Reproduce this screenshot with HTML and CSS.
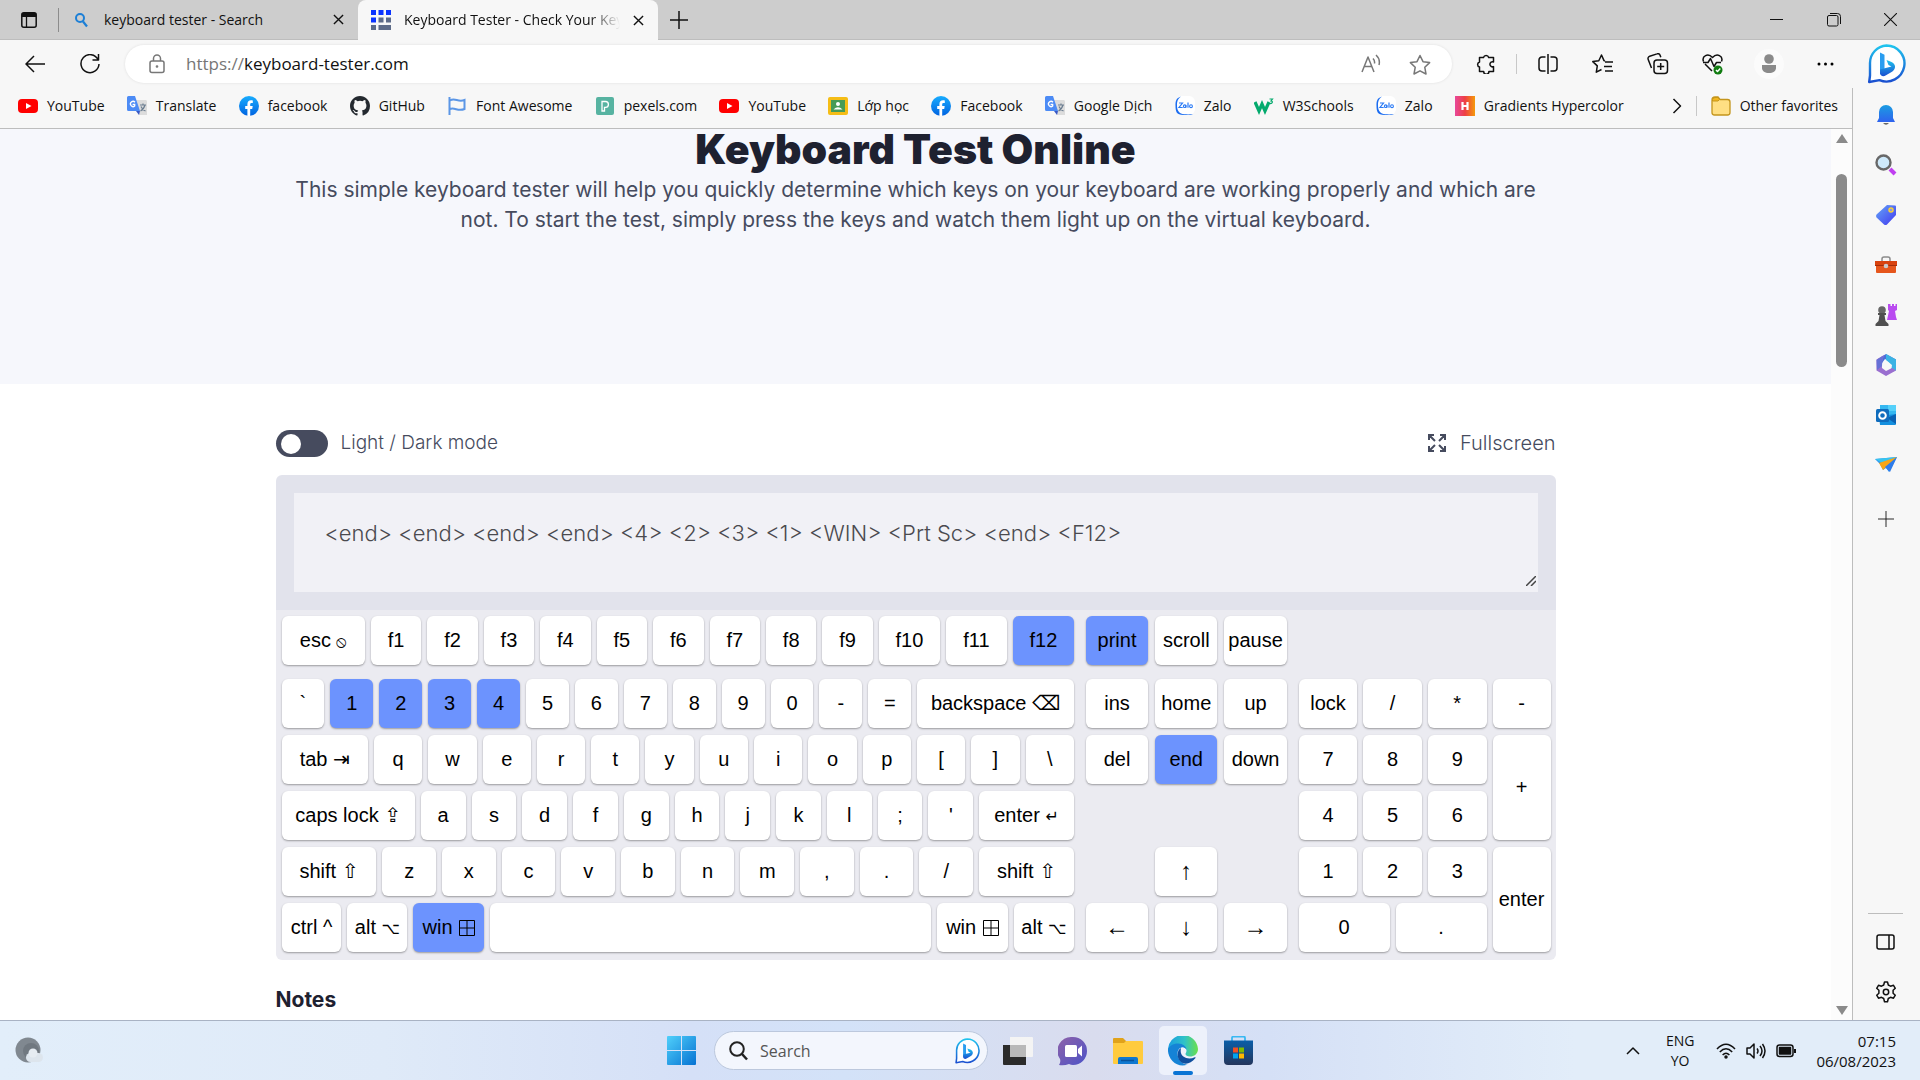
FILE: index.html
```html
<!DOCTYPE html>
<html lang="en">
<head>
<meta charset="utf-8">
<title>Keyboard Tester - Check Your Keys</title>
<link rel="stylesheet" href="styles.css">
</head>
<body>
<svg class="defs" aria-hidden="true">
  <defs>
    <linearGradient id="g-bing" x1="0" y1="0" x2="0" y2="1"><stop offset="0" stop-color="#1fc4ee"/><stop offset="1" stop-color="#1a4fd0"/></linearGradient>
    <linearGradient id="g-blue" x1="0" y1="0" x2="1" y2="1"><stop offset="0" stop-color="#64a6f7"/><stop offset="1" stop-color="#4238f0"/></linearGradient>
    <linearGradient id="g-bell" x1="0" y1="0" x2="0" y2="1"><stop offset="0" stop-color="#1b9de2"/><stop offset="1" stop-color="#2f62ee"/></linearGradient>
    <linearGradient id="g-win" x1="0" y1="0" x2="1" y2="1"><stop offset="0" stop-color="#50d0fb"/><stop offset="1" stop-color="#0672d2"/></linearGradient>
    <linearGradient id="g-fb" x1="0" y1="0" x2="0" y2="1"><stop offset="0" stop-color="#18acfe"/><stop offset="1" stop-color="#0163e0"/></linearGradient>
    <linearGradient id="g-chat" x1="0" y1="0" x2="1" y2="1"><stop offset="0" stop-color="#8f62a8"/><stop offset="1" stop-color="#4c53c8"/></linearGradient>
    <linearGradient id="g-edge" x1="0" y1="0" x2="1" y2="0"><stop offset="0" stop-color="#1a9de0"/><stop offset=".55" stop-color="#2fc2c8"/><stop offset="1" stop-color="#6be04a"/></linearGradient>
    <linearGradient id="g-hyper" x1="0" y1="0" x2="1" y2="0"><stop offset="0" stop-color="#e8489a"/><stop offset=".5" stop-color="#ee3f44"/><stop offset="1" stop-color="#f59a0a"/></linearGradient>
    <linearGradient id="g-store" x1="0" y1="0" x2="0" y2="1"><stop offset="0" stop-color="#0a5ea8"/><stop offset="1" stop-color="#24365c"/></linearGradient>
    <symbol id="i-close" viewBox="0 0 12 12"><path d="M1 1l10 10M11 1L1 11"/></symbol>
    <symbol id="i-plus" viewBox="0 0 18 18"><path d="M9 0v18M0 9h18"/></symbol>
    <symbol id="i-youtube" viewBox="0 0 20 20"><rect y="3" width="20" height="14" rx="4" fill="#f00"/><path d="M8 7l5.500 3L8 13z" fill="#fff"/></symbol>
    <symbol id="i-translate" viewBox="0 0 20 20"><path d="M9 4h9.500c.8 0 1.500.7 1.500 1.500V19H12z" fill="#dcdcdc"/><path d="M1.500 0H8l5 15H1.500A1.500 1.500 0 010 13.500v-12A1.500 1.500 0 011.500 0z" fill="#4c8bf5"/><path d="M9 15h4l-1 4z" fill="#3757c4"/><path d="M8 6.200A2.600 2.600 0 107.700 10V8.500H5.600" fill="none" stroke="#fff" stroke-width="1.300"/><path d="M13 9h6M16 7.500V9M18 9c-.8 3-2.600 5-4.500 6M14 10.500c.8 2 2.500 3.700 4.500 4.500" fill="none" stroke="#6d7f92" stroke-width="1.200"/></symbol>
    <symbol id="i-facebook" viewBox="0 0 20 20"><circle cx="10" cy="10" r="10" fill="url(#g-fb)"/><path d="M8.400 20v-7H6.200v-3h2.200V8.200c0-2.600 1.400-3.900 3.600-3.900.7 0 1.500.1 1.800.2v2.400h-1.200c-1.100 0-1.400.6-1.400 1.400V10h2.500l-.5 3h-2v7z" fill="#fff"/></symbol>
    <symbol id="i-zalo" viewBox="0 0 20 20"><rect x="1" width="19" height="19" rx="6" fill="#fff"/><path d="M6 .5C1 2 .4 5 .5 10s.5 9 8 9c3.500 0 7 .2 9.500-.8-3 .2-9 .5-12-.7C2.500 15.500 2 12 2 9s.5-6 4-8.500z" fill="#1a6cf0"/><path d="M4 7h3.500L4 11.500h3.700M10.800 9v2.800M13 6.500v5.300" fill="none" stroke="#2a7af5" stroke-width="1.200"/><circle cx="9.700" cy="10.200" r="1.300" fill="none" stroke="#2a7af5" stroke-width="1.100"/><circle cx="16" cy="10.200" r="1.400" fill="none" stroke="#2a7af5" stroke-width="1.100"/></symbol>
    <symbol id="i-bing" viewBox="0 0 40 40"><path d="M20.500 1.500a18 18 0 11-7 34.600L3.200 38 4 31.500V19A17.500 17.500 0 0120.500 1.500z" fill="#fff" stroke="url(#g-bing)" stroke-width="2.400" stroke-linejoin="round"/><path d="M14 8.500l4.500 2.200v15.500L14 29.500z" fill="#2a9df0"/><path d="M14 25.500v4.200c1 2.800 3.500 3 6 1.600l6-3.600c3-2 4-5.200 2-7.700-.8-1-1.500-1.500-3-2.200L20.500 16l2 5 3 1.500z" fill="url(#g-bing)"/></symbol>
  </defs>
</svg>

<header class="titlebar">
  <button class="plain workspaces" aria-label="Tab actions"><svg width="16" height="18" viewBox="0 0 16 18"><rect x=".8" y="1.800" width="14.400" height="14.400" rx="2" fill="none" stroke="#111" stroke-width="1.500"/><path d="M1 2h14v4H1z" fill="#111"/><path d="M5.500 5v11" stroke="#111" stroke-width="1.300"/></svg></button>
  <div class="tab">
    <svg class="tab-icon" width="20" height="16" viewBox="0 0 20 16"><circle cx="9" cy="6" r="4" fill="none" stroke="#1c7fd6" stroke-width="2"/><path d="M12 9.500l4 5" stroke="#1c7fd6" stroke-width="2.200"/></svg>
    <span class="tab-title">keyboard tester - Search</span>
    <button class="plain" aria-label="Close tab"><svg class="line" width="11" height="11"><use href="#i-close"/></svg></button>
  </div>
  <div class="tab active">
    <svg class="tab-icon" width="20" height="20" viewBox="0 0 20 20"><path d="M0 0h5v5H0zM7.500 0h5v5h-5zM15 0h5v5h-5zM0 7.500h5v5H0z" fill="#0b34ff"/><path d="M7.500 7.500h5v5h-5zM15 7.500h5v5h-5zM0 15h5v5H0zM7.500 15H20v5H7.500z" fill="#5d6b88"/></svg>
    <span class="tab-title fade">Keyboard Tester - Check Your Keys</span>
    <button class="plain" aria-label="Close tab"><svg class="line" width="11" height="11"><use href="#i-close"/></svg></button>
  </div>
  <button class="plain new-tab" aria-label="New tab"><svg class="line" width="18" height="18"><use href="#i-plus"/></svg></button>
  <div class="window-controls">
    <button class="plain" aria-label="Minimize"><svg class="line thin" width="13" height="13"><path d="M0 6.500h13"/></svg></button>
    <button class="plain" aria-label="Restore"><svg class="line thin" width="14" height="14"><rect x=".5" y="2.500" width="10.500" height="10.500" rx="1.500"/><path d="M3 .5h7.500a3 3 0 013 3V11"/></svg></button>
    <button class="plain" aria-label="Close"><svg class="line thin" width="13" height="13" viewBox="0 0 12 12"><path d="M0 0l12 12M12 0L0 12"/></svg></button>
  </div>
</header>

<nav class="toolbar">
  <button class="plain back" aria-label="Back"><svg class="line" width="20" height="18"><path d="M20 9H1M9 1L1 9l8 8"/></svg></button>
  <button class="plain reload" aria-label="Refresh"><svg class="line" width="20" height="20"><path d="M18 5.500A9 9 0 1019 10M18.500 0v6h-6"/></svg></button>
  <div class="address">
    <svg class="line grey" width="16" height="20"><rect x="1" y="7" width="14" height="11.500" rx="2"/><path d="M4.500 7V4.500a3.500 3.500 0 017 0V7"/><circle cx="8" cy="12.500" r=".6"/></svg>
    <label class="url"><span class="scheme">https://</span><input type="text" aria-label="Address" value="keyboard-tester.com"></label>
    <button class="plain" aria-label="Read aloud"><svg class="line grey" width="20" height="20"><path d="M1 18L7 3l6 15M3.200 12.500h7.600M12 4.500q2 2 1.500 5M15 1q4.500 4 3 10"/></svg></button>
    <button class="plain" aria-label="Favorite"><svg class="line grey" width="22" height="21" viewBox="0 0 22 21"><path d="M11 1.500l3 6.200 6.600.9-4.800 4.700 1.200 6.700-6-3.200L5 20l1.200-6.700L1.400 8.600 8 7.700z"/></svg></button>
  </div>
  <div class="tools">
    <button class="plain" aria-label="Extensions"><svg class="line" width="20" height="20"><path d="M3.500 3.500h4a2.700 2.700 0 015.200 0h4.800v4.600a2.500 2.500 0 100 4.500v5h-4.600a2.600 2.600 0 01-5.200 0H3.500V13a2.600 2.600 0 010-5z"/></svg></button>
    <span class="rule"></span>
    <button class="plain" aria-label="Split screen"><svg class="line" width="20" height="20"><path d="M7.500 3H4a3 3 0 00-3 3v8a3 3 0 003 3h3.500M12.500 3H16a3 3 0 013 3v8a3 3 0 01-3 3h-3.500M10 0v20"/></svg></button>
    <button class="plain" aria-label="Favorites"><svg class="line" width="22" height="20"><path d="M13 7l-1-.4L9.500 1 6.800 6.800.8 7.600l4.500 4.300-1 6.300 5.200-2.700M13 8h8M12 12.500h8M13 17h8"/></svg></button>
    <button class="plain" aria-label="Collections"><svg class="line" width="22" height="22"><rect x="7" y="7" width="13.500" height="13.500" rx="3"/><path d="M13.700 10v7M10.200 13.500h7M4.500 15L1.200 6.500a2.500 2.500 0 011.500-3.300L10 .9a2.500 2.500 0 013.200 1.500l.6 1.800"/></svg></button>
    <button class="plain" aria-label="Browser essentials"><svg class="line" width="22" height="22"><path d="M10 18L3 11M1.500 8.500C-.5 3 6-.5 10.500 4.500 15-.5 21.500 3 19.500 8.500M1 9.500h5l2.500-4 3.500 8 2.500-4H19"/><circle cx="16" cy="17" r="4.500" fill="#107c10" stroke="none"/><path d="M14 17l1.500 1.500 2.800-3" stroke="#fff"/></svg></button>
    <button class="plain avatar" aria-label="Profile"><svg width="20" height="20"><circle cx="10" cy="5" r="4.800" fill="#8a8a8a"/><path d="M3 11h14v3c0 3-3 5-7 5s-7-2-7-5z" fill="#8a8a8a"/></svg></button>
    <button class="plain" aria-label="More"><svg width="17" height="4"><circle cx="2" cy="2" r="1.500"/><circle cx="8.500" cy="2" r="1.500"/><circle cx="15" cy="2" r="1.500"/></svg></button>
    <button class="plain bing" aria-label="Bing Chat"><svg width="40" height="40"><use href="#i-bing"/></svg></button>
  </div>
</nav>

<div class="middle">
  <div class="browser-main">
    <nav class="bookmarks">
      <div class="bookmark-list">
        <a href="#"><svg><use href="#i-youtube"/></svg>YouTube</a>
        <a href="#"><svg><use href="#i-translate"/></svg>Translate</a>
        <a href="#"><svg><use href="#i-facebook"/></svg>facebook</a>
        <a href="#"><svg viewBox="0 0 16 16"><path fill="#24292f" d="M8 0C3.580 0 0 3.580 0 8c0 3.540 2.290 6.530 5.470 7.590.4.070.55-.17.55-.38v-1.490c-2.010.37-2.530-.49-2.690-.94-.09-.23-.48-.94-.82-1.130-.28-.15-.68-.52-.01-.53.63-.01 1.080.58 1.230.82.72 1.210 1.870.87 2.330.66.070-.52.280-.87.510-1.070-1.780-.2-3.640-.89-3.640-3.950 0-.87.310-1.590.82-2.150-.08-.2-.36-1.020.08-2.120 0 0 .67-.21 2.200.82a7.600 7.600 0 014 0c1.530-1.040 2.200-.82 2.200-.82.44 1.100.16 1.920.08 2.120.51.560.82 1.270.82 2.150 0 3.070-1.870 3.750-3.650 3.950.29.250.54.730.54 1.480v2.200c0 .21.150.46.550.38A8 8 0 0016 8c0-4.420-3.580-8-8-8z"/></svg>GitHub</a>
        <a href="#"><svg viewBox="0 0 20 20"><path d="M2.500 1v18M3 4.500c5-3 8 2 14.500-.5v9c-6.500 3-9.500-2-14.500 0" fill="none" stroke="#5b96e6" stroke-width="2"/></svg>Font Awesome</a>
        <a href="#"><svg viewBox="0 0 20 20"><rect x="1" y="1" width="18" height="18" rx="2" fill="#57b3a1"/><path d="M7 15V5.500h3.500a2.900 2.900 0 010 5.800H9.500V15z" fill="none" stroke="#fff" stroke-width="1.300"/></svg>pexels.com</a>
        <a href="#"><svg><use href="#i-youtube"/></svg>YouTube</a>
        <a href="#"><svg viewBox="0 0 20 20"><rect y="1" width="20" height="18" rx="2" fill="#f5bd16"/><rect x="3" y="4" width="14" height="12" fill="#469b57"/><circle cx="10" cy="8" r="2" fill="#fff"/><path d="M5.500 13.500q4.500-4.500 9 0z" fill="#fff"/></svg>Lớp học</a>
        <a href="#"><svg><use href="#i-facebook"/></svg>Facebook</a>
        <a href="#"><svg><use href="#i-translate"/></svg>Google Dịch</a>
        <a href="#"><svg><use href="#i-zalo"/></svg>Zalo</a>
        <a href="#"><svg viewBox="0 0 20 20"><path d="M1 6l4 9 3-7 3 7 4-9" fill="none" stroke="#04aa6d" stroke-width="3.200"/><path d="M15.500 3h3L17 5c2 0 2 3-1.500 2.500" fill="none" stroke="#04aa6d" stroke-width="1.200"/></svg>W3Schools</a>
        <a href="#"><svg><use href="#i-zalo"/></svg>Zalo</a>
        <a href="#"><svg viewBox="0 0 20 20"><rect width="20" height="20" fill="url(#g-hyper)"/><path d="M7.500 6v8M12.500 6v8M7.500 10h5" stroke="#fff" stroke-width="2.200"/></svg>Gradients Hypercolor</a>
      </div>
      <button class="plain" aria-label="More bookmarks"><svg class="line" width="10" height="16"><path d="M1.500 1L8.500 8l-7 7"/></svg></button>
      <span class="rule"></span>
      <a href="#"><svg viewBox="0 0 20 20"><path d="M1 4a3 3 0 013-3h3l2 2.500h7.500A2.500 2.500 0 0119 6v10.500a2.500 2.500 0 01-2.500 2.500h-13A2.500 2.500 0 011 16.500z" fill="#ffdf83" stroke="#c4951c" stroke-width="1.300"/><path d="M1.500 5V3.500Q2 1.500 4 1.500h3l1.500 2L7 5z" fill="#f2b61e" stroke="#c4951c"/></svg>Other favorites</a>
    </nav>

    <div class="viewport">
      <main class="page">
        <section class="hero">
          <h1>Keyboard Test Online</h1>
          <p>This simple keyboard tester will help you quickly determine which keys on your keyboard are working properly and which are not. To start the test, simply press the keys and watch them light up on the virtual keyboard.</p>
        </section>
        <section class="tester">
          <div class="options">
            <label class="mode"><input type="checkbox" class="switch">Light / Dark mode</label>
            <button class="plain fullscreen"><svg width="18" height="18" viewBox="0 0 18 18"><path d="M1 6V1h5M12 1h5v5M17 12v5h-5M6 17H1v-5M1 1l6 6M17 1l-6 6M17 17l-6-6M1 17l6-6" fill="none" stroke="#464b5e" stroke-width="2"/></svg>Fullscreen</button>
          </div>
          <div class="log"><textarea aria-label="Pressed keys">&lt;end&gt; &lt;end&gt; &lt;end&gt; &lt;end&gt; &lt;4&gt; &lt;2&gt; &lt;3&gt; &lt;1&gt; &lt;WIN&gt; &lt;Prt Sc&gt; &lt;end&gt; &lt;F12&gt;</textarea></div>
          <div class="keyboard">
            <div class="block">
              <div class="row fn">
                <button class="esc">esc <i class="small">⦸</i></button><button>f1</button><button>f2</button><button>f3</button><button>f4</button><button>f5</button><button>f6</button><button>f7</button><button>f8</button><button>f9</button><button class="wide-fn">f10</button><button class="wide-fn">f11</button><button class="wide-fn on">f12</button>
              </div>
              <div class="row">
                <button>`</button><button class="on">1</button><button class="on">2</button><button class="on">3</button><button class="on">4</button><button>5</button><button>6</button><button>7</button><button>8</button><button>9</button><button>0</button><button>-</button><button>=</button><button class="backspace">backspace <i>⌫</i></button>
              </div>
              <div class="row">
                <button class="tabkey">tab <i>⇥</i></button><button>q</button><button>w</button><button>e</button><button>r</button><button>t</button><button>y</button><button>u</button><button>i</button><button>o</button><button>p</button><button>[</button><button>]</button><button>\</button>
              </div>
              <div class="row">
                <button class="caps">caps lock <i>⇪</i></button><button>a</button><button>s</button><button>d</button><button>f</button><button>g</button><button>h</button><button>j</button><button>k</button><button>l</button><button>;</button><button>'</button><button class="enter">enter <i class="small">↵</i></button>
              </div>
              <div class="row">
                <button class="shift">shift <i>⇧</i></button><button>z</button><button>x</button><button>c</button><button>v</button><button>b</button><button>n</button><button>m</button><button>,</button><button>.</button><button>/</button><button class="shift">shift <i>⇧</i></button>
              </div>
              <div class="row mods">
                <button>ctrl ^</button><button>alt <i class="small">⌥</i></button><button class="win on">win <svg class="win-glyph" viewBox="0 0 16 16"><path d="M.5.5h15v15H.5zM8 .5v15M.5 8h15"/></svg></button><button class="space" aria-label="space"></button><button class="win">win <svg class="win-glyph" viewBox="0 0 16 16"><path d="M.5.5h15v15H.5zM8 .5v15M.5 8h15"/></svg></button><button>alt <i class="small">⌥</i></button>
              </div>
            </div>
            <div class="nav-keys">
              <button class="on">print</button><button>scroll</button><button>pause</button>
              <button>ins</button><button>home</button><button>up</button>
              <button>del</button><button class="on">end</button><button>down</button>
              <button class="arrow up">↑</button>
              <button class="arrow left">←</button><button class="arrow down">↓</button><button class="arrow right">→</button>
            </div>
            <div class="numpad">
              <button>lock</button><button>/</button><button>*</button><button>-</button>
              <button>7</button><button>8</button><button>9</button><button class="tall">+</button>
              <button>4</button><button>5</button><button>6</button>
              <button>1</button><button>2</button><button>3</button><button class="tall">enter</button>
              <button class="half">0</button><button class="half">.</button>
            </div>
          </div>
          <h2>Notes</h2>
        </section>
      </main>
      <div class="scrollbar"><span class="arrow-up"></span><span class="thumb"></span><span class="arrow-down"></span></div>
    </div>
  </div>

  <aside class="sidebar">
    <button class="plain" aria-label="Notifications"><svg viewBox="0 0 22 22"><path d="M11 1a7 7 0 017 7v6l2 4H2l2-4V8a7 7 0 017-7z" fill="url(#g-bell)"/><path d="M8 19h6q-3 3.500-6 0z" fill="#666"/></svg></button>
    <button class="plain" aria-label="Search"><svg viewBox="0 0 22 22"><path d="M15 15l5 5" stroke="#c03ff0" stroke-width="4"/><circle cx="8.500" cy="8.500" r="7" fill="#cfeafb" stroke="#686868" stroke-width="2.400"/></svg></button>
    <button class="plain" aria-label="Shopping"><svg viewBox="0 0 22 22"><path d="M12 1l8 .5q1 0 1 1L21 11 12 20.500q-1.500 1-3 0l-7.500-7q-1-1.500 0-3z" fill="url(#g-blue)"/><circle cx="16" cy="6" r="2" fill="#8f9ad8" stroke="#f8cf3a" stroke-width="1.500"/></svg></button>
    <button class="plain" aria-label="Tools"><svg viewBox="0 0 22 22"><path d="M7 7V5q0-2 2-2h4q2 0 2 2v2" fill="none" stroke="#8c8c8c" stroke-width="1.500"/><path d="M0 7h22v5H0z" fill="#d8420e"/><path d="M1 12h20v6q0 1-1 1H2q-1 0-1-1z" fill="#e6561c"/><path d="M0 11h22v1H0z" fill="#a52d08"/><circle cx="11" cy="12" r="2.300" fill="#c9c9c9"/></svg></button>
    <button class="plain" aria-label="Games"><svg viewBox="0 0 22 22"><path d="M13 0h2.500v2H17V0h2v2h1.500V0H22v6l-2 1 1 6 1 3H12l2-9-1-1z" fill="#b94bf0"/><circle cx="7" cy="6" r="3.800" fill="#666"/><path d="M3 9h8v2H9.500l1 6 3 3v2H.5v-2l3-3 1-6H3z" fill="#505050"/></svg></button>
    <button class="plain" aria-label="Microsoft 365"><svg viewBox="0 0 22 22"><path d="M11 0l10 5.500v4L15 8 10 5 7 9v6l-5-2V5.500z" fill="#4a6fd8"/><path d="M11 0l10 5.500v11L16 18l1-7-6-5z" fill="#3bb3e4"/><path d="M1.500 5.500L9 1 7 8v6l4 3 6-3 4 2.500L11 22l-9.500-5.500z" fill="#9a6fd0"/><path d="M1.500 6L8 2 7 12l-5 4z" fill="#6671d6"/><circle cx="11" cy="11" r="3.600" fill="#f7f7f7"/></svg></button>
    <button class="plain" aria-label="Outlook"><svg viewBox="0 0 22 22"><path d="M5 1h16v12H5z" fill="#35b8f1"/><path d="M13 1h8v6h-8z" fill="#55d0fa"/><path d="M4 12l17-2v10q0 1-1 1H5z" fill="#1490df"/><path d="M21 10v10l-9-6z" fill="#0a62b4"/><rect x="1" y="5" width="13" height="13" rx="1.500" fill="#0f6cbd"/><circle cx="7.500" cy="11.500" r="3.300" fill="none" stroke="#fff" stroke-width="2"/></svg></button>
    <button class="plain" aria-label="Drop"><svg viewBox="0 0 22 22"><path d="M0 5l22-2L14 18l-3-4-3 2-3-6z" fill="#2f95f0"/><path d="M0 5l22-2-15 6z" fill="#37c4ef"/><path d="M4 9l18-6L8 16z" fill="#f7a515"/><path d="M10 13l12-10-7 15z" fill="#2d7bea"/></svg></button>
    <button class="plain add" aria-label="Customize"><svg class="line thin" width="16" height="16" viewBox="0 0 18 18"><use href="#i-plus"/></svg></button>
    <span class="side-rule"></span>
    <button class="plain" aria-label="Hide sidebar"><svg class="line" viewBox="0 0 22 22"><rect x="2" y="4" width="17" height="14" rx="2"/><path d="M14 4v14"/></svg></button>
    <button class="plain" aria-label="Settings"><svg class="line" viewBox="0 0 22 22"><path d="M9.500 1h3l.8 3 2.200 1.200 3-.9 1.800 3-2.200 2v2.900l2.200 2-1.800 3-3-.9-2.200 1.200-.8 3.200h-3l-.8-3.200-2.200-1.200-3 .9-1.800-3 2.200-2V9.300l-2.200-2 1.800-3 3 .9L8.700 4z"/><circle cx="11" cy="11" r="2.700"/></svg></button>
  </aside>
</div>

<footer class="taskbar">
  <button class="plain weather" aria-label="Weather"><svg width="28" height="28" viewBox="0 0 28 28"><circle cx="13" cy="13" r="12.500" fill="#808890"/><circle cx="16" cy="14" r="8" fill="#707880"/><rect x="11" y="16" width="17" height="9" rx="4.500" fill="#dde5ed"/><circle cx="18" cy="16" r="4.500" fill="#e6ecf2"/></svg></button>
  <div class="apps">
    <button class="plain" aria-label="Start"><svg width="29" height="29" viewBox="0 0 29 29"><path d="M1 0h13v14H0V1q0-1 1-1zM15 0h13q1 0 1 1v13H15zM0 15h14v14H1q-1 0-1-1zM15 15h14v13q0 1-1 1H15z" fill="url(#g-win)"/></svg></button>
    <label class="search"><svg width="19" height="20" viewBox="0 0 19 20"><circle cx="8" cy="8" r="6.800" fill="none" stroke="#222" stroke-width="2"/><path d="M13 13l5 5.500" stroke="#222" stroke-width="2.500"/></svg><input type="text" placeholder="Search" aria-label="Search"><svg width="26" height="26" viewBox="0 0 40 40"><use href="#i-bing"/></svg></label>
    <button class="plain" aria-label="Task view"><svg width="30" height="28"><path d="M0 8h23v20H1q-1 0-1-1z" fill="#2b2b2b"/><path d="M7 0h22q1 0 1 1v18q0 1-1 1H7z" fill="#f4f4f4"/><path d="M7 8h16v12H7z" fill="#b9b9b9"/></svg></button>
    <button class="plain" aria-label="Chat"><svg width="30" height="30" viewBox="0 0 30 30"><path d="M15 1a14 14 0 110 28q-2 0-4-1-5 2-10 1 2-3 1-6A14 14 0 0115 1z" fill="url(#g-chat)"/><rect x="7" y="9" width="12" height="12" rx="1.500" fill="#fff"/><path d="M20 13l4-3.500v11L20 17z" fill="#fff"/></svg></button>
    <button class="plain" aria-label="File Explorer"><svg width="30" height="28"><path d="M0 2q0-1 1-1h9l3 3v4H0z" fill="#e0a21a"/><path d="M0 6h11l2-2h16q1 0 1 1v21q0 1-1 1H1q-1 0-1-1z" fill="#ffcb3e"/><path d="M5 27v-5q0-2 2-2h16q2 0 2 2v5z" fill="#0f78d0"/><path d="M8 23.500h13" stroke="#07529a" stroke-width="1.500"/></svg></button>
    <button class="plain current" aria-label="Microsoft Edge"><svg width="30" height="30" viewBox="0 0 30 30"><path d="M0 15A15 15 0 0130 13c0 5-4 7.500-8 7.500-2.500 0-4.500-1-4.500-2.500 0-1 1-1.500 1-3.500 0-2-2-4-5-4C8 10.500 3 13 2 18z" fill="url(#g-edge)"/><path d="M0 14c1-4 5-6.500 10-6.500 5 0 8.500 3 8.500 6.500-1-2-3-3-5-2.500-4 1-5 6-3 10.500 2 4 5 6.500 9 6.500-9 4-19.500-4-19.500-14.500z" fill="#1583d6"/><path d="M13 12c-4 2-4.500 9-1 13 3.500 4 10 4 15.500-3 .3-.7-.3-1-.8-.7-6 3-14 .2-14-6 0-1 .1-2.300.3-3.300z" fill="#104f9e"/></svg></button>
    <button class="plain" aria-label="Microsoft Store"><svg width="29" height="29" viewBox="0 0 29 29"><path d="M8 5V2q0-1.500 1.500-1.500h10Q21 .5 21 2v3" fill="none" stroke="#39b8f2" stroke-width="1.800"/><path d="M0 4.500h29V25q0 4-4 4H4q-4 0-4-4z" fill="url(#g-store)"/><path d="M9 11.500h5v5H9z" fill="#f25022"/><path d="M15 11.500h5v5h-5z" fill="#7fba00"/><path d="M9 17.500h5v5H9z" fill="#00a4ef"/><path d="M15 17.500h5v5h-5z" fill="#ffb900"/></svg></button>
  </div>
  <div class="tray">
    <button class="plain" aria-label="Hidden icons"><svg class="line" width="14" height="9"><path d="M1 8l6-6 6 6"/></svg></button>
    <button class="plain lang">ENG<br>YO</button>
    <button class="plain status" aria-label="Network, volume, battery">
      <svg class="line" width="20" height="16"><path d="M1 6q9-9.500 18 0M3.800 9q6.200-6.500 12.400 0M6.600 12q3.400-3.500 6.800 0"/><circle cx="10" cy="14" r="1" fill="#111"/></svg>
      <svg class="line" width="20" height="16"><path d="M1 5h3l4-4v14l-4-4H1zM11 5.500q2 2.500 0 5M14 3q4 5 0 10M16.500 1q5 7 0 14"/></svg>
      <svg class="line" width="20" height="14"><rect x="1" y="1" width="16" height="11.500" rx="2.500"/><rect x="3.500" y="3.500" width="11" height="6.500" fill="#111"/><path d="M19 5v4" stroke-width="2"/></svg>
    </button>
    <button class="plain clock">07:15<br>06/08/2023</button>
  </div>
</footer>
</body>
</html>
```
FILE: styles.css
```css
* { box-sizing: border-box; }

body {
  margin: 0;
  height: 100vh;
  display: flex;
  flex-direction: column;
  overflow: hidden;
  background: #fff;
  color: #111;
  font: 14px/20px "Open Sans", "Noto Sans", sans-serif;
}

button, input, textarea { font: inherit; color: inherit; }
a { color: inherit; text-decoration: none; }
svg { display: block; flex: none; }
.defs { position: absolute; width: 0; height: 0; }

.plain {
  display: flex;
  align-items: center;
  justify-content: center;
  padding: 0;
  border: 0;
  background: none;
}

.line { fill: none; stroke: #111; stroke-width: 1.5; stroke-linejoin: round; }
.line.thin { stroke-width: 1; }
.line.grey { stroke: #777; }

.rule { width: 1px; height: 20px; background: #c8c8c8; }

/* Title bar and tabs */
.titlebar {
  flex: none;
  display: flex;
  height: 40px;
  background: #cdcdcd;
  border-bottom: 1px solid #bdbdbd;
}
.workspaces { width: 58px; position: relative; }
.workspaces::after {
  content: "";
  position: absolute;
  right: -1px;
  top: 8px;
  width: 1px;
  height: 24px;
  background: #8c8c8c;
}
.tab {
  display: flex;
  align-items: center;
  gap: 13px;
  width: 300px;
  padding: 0 14px 0 13px;
}
.tab.active {
  height: 40px;
  background: #f7f7f7;
  border-radius: 8px 8px 0 0;
}
.tab-title { flex: 1; overflow: hidden; white-space: nowrap; }
.fade { mask-image: linear-gradient(to right, #000 86%, transparent); }
.new-tab { width: 42px; }
.window-controls { display: flex; margin-left: auto; padding-right: 1px; }
.window-controls .plain { width: 57px; }

/* Toolbar */
.toolbar {
  flex: none;
  display: flex;
  align-items: center;
  height: 48px;
  background: #f7f7f7;
}
.back { width: 70px; }
.reload { width: 40px; margin-right: 15px; }
.address {
  flex: 1;
  display: flex;
  align-items: center;
  gap: 28px;
  height: 38px;
  padding: 0 21px 0 24px;
  background: #fff;
  border-radius: 19px;
  box-shadow: 0 0 3px #0000001a;
}
.url { flex: 1; display: flex; margin-left: -7px; font-size: 17px; }
.scheme { color: #767676; }
.url input { flex: 1; padding: 0; border: 0; background: none; outline: 0; }
.tools { display: flex; align-items: center; width: 468px; }
.tools .plain { width: 55px; height: 40px; }
.tools .plain:first-child { width: 64px; margin-left: 2px; }
.tools .rule { margin: 0 3px 0 -2px; }
.tools .avatar { width: 30px; height: 30px; margin: 0 14px; border-radius: 50%; background: #fbfbfb; }
.tools .bing { width: 66px; }

/* Area below the toolbar */
.middle { flex: 1; display: flex; min-height: 0; }
.browser-main { flex: 1; display: flex; flex-direction: column; min-width: 0; }

.bookmarks {
  flex: none;
  display: flex;
  align-items: center;
  gap: 14px;
  height: 41px;
  padding: 0 14px 4px 18px;
  background: #f7f7f7;
  border-bottom: 1px solid #bdbdbd;
}
.bookmark-list { flex: 1; display: flex; justify-content: space-between; margin-right: 34px; }
.bookmarks a { display: flex; align-items: center; gap: 9px; white-space: nowrap; }
.bookmarks a svg { width: 20px; height: 20px; }

.viewport { flex: 1; display: flex; min-height: 0; }
.page {
  flex: 1;
  min-width: 0;
  overflow: hidden;
  color: #464b5e;
  font-family: Inter, "Open Sans", sans-serif;
}
.hero { height: 255px; background: #f6f7fc; text-align: center; }
.hero h1 { margin: 0; color: #1e2130; font-size: 41px; font-weight: 900; line-height: 40px; }
.hero p { max-width: 1270px; margin: 6px auto 0; font-size: 21px; line-height: 30px; }

.scrollbar {
  flex: none;
  display: flex;
  flex-direction: column;
  align-items: center;
  width: 21px;
  padding: 5px 0;
  background: #fcfcfc;
}
.arrow-up, .arrow-down { border: 6px solid transparent; }
.arrow-up { border-top: 0; border-bottom: 9px solid #8b8b8b; }
.arrow-down { margin-top: auto; border-bottom: 0; border-top: 9px solid #8b8b8b; }
.thumb { width: 11px; height: 193px; margin-top: 31px; border-radius: 6px; background: #8b8b8b; }

/* Tester */
.tester { max-width: 1280px; margin: 0 auto; }
.options {
  display: flex;
  justify-content: space-between;
  align-items: flex-end;
  height: 91px;
  padding-bottom: 18px;
}
.mode { display: flex; align-items: center; gap: 13px; height: 28px; font-size: 19px; font-weight: 300; }
.switch {
  appearance: none;
  width: 52px;
  height: 27px;
  margin: 0;
  padding: 4px 5px;
  border-radius: 14px;
  background: #464b5e;
}
.switch::before { content: ""; display: block; width: 20px; height: 20px; border-radius: 50%; background: #fff; }
.fullscreen { gap: 14px; height: 28px; font-size: 20px; font-weight: 300; }

.log { padding: 18px; background: #e2e3ec; border-radius: 6px 6px 0 0; }
.log textarea {
  display: block;
  width: 100%;
  height: 99px;
  padding: 25px 31px;
  border: 0;
  outline: 0;
  background: #f1f1f6 url("data:image/svg+xml,%3Csvg xmlns='http://www.w3.org/2000/svg' width='10' height='10'%3E%3Cpath d='M0 10L10 0M5 10l5-5' stroke='%23444' stroke-width='1.500'/%3E%3C/svg%3E") no-repeat right 2px bottom 6px;
  color: #4a4a4f;
  font-size: 22px;
  font-weight: 300;
  line-height: 30px;
}
.log textarea::-webkit-resizer { background: none; }

.keyboard {
  display: grid;
  grid-template-columns: 793fr 201fr 252fr;
  column-gap: 12px;
  padding: 6px 5px 8px 6px;
  background: #ebebf1;
  border-radius: 0 0 6px 6px;
}
.keyboard button {
  min-width: 0;
  height: 49px;
  padding: 0 0 2px;
  border: 0;
  border-radius: 6px;
  background: #fff;
  box-shadow: 0 1px 2px #00000059;
  color: #000;
  font: 20px/24px "Liberation Sans", sans-serif;
  white-space: nowrap;
}
.keyboard button.on { background: #6c93fe; }
.keyboard i { font: 20px/20px "DejaVu Sans", sans-serif; }
.keyboard i.small { font-size: 16px; }
.win-glyph {
  display: inline-block;
  width: 16px;
  height: 16px;
  margin-left: 1px;
  vertical-align: -2px;
  fill: none;
  stroke: #000;
}
.keyboard .arrow { font-size: 24px; }

.block { display: flex; flex-direction: column; gap: 7px; }
.row { display: flex; gap: 6px; }
.row.fn { margin-bottom: 7px; }
.row button { flex: 43 1 0; }
.row .esc { flex-grow: 71; }
.row .wide-fn { flex-grow: 52; }
.row .backspace { flex-grow: 157; }
.row .tabkey { flex-grow: 77; }
.row .caps { flex-grow: 128; }
.row .enter { flex-grow: 91; }
.row .shift { flex-grow: 76; }
.row.mods button { flex-grow: 60; }
.row.mods .win { flex-grow: 71; }
.row.mods .space { flex-grow: 441; }

.nav-keys, .numpad {
  display: grid;
  grid-template-rows: 56px repeat(5, 49px);
  gap: 7px;
}
.nav-keys { grid-template-columns: repeat(3, 1fr); }
.nav-keys .up { grid-area: 5 / 2; }
.nav-keys .left { grid-area: 6 / 1; }
.nav-keys .down { grid-area: 6 / 2; }
.nav-keys .right { grid-area: 6 / 3; }

.numpad {
  grid-template-columns: repeat(6, 1fr) 58px;
  grid-template-rows: repeat(5, 49px);
  column-gap: 6px;
  padding-top: 63px;
}
.numpad button { grid-column: span 2; }
.numpad button:nth-child(4), .numpad .tall { grid-column: 7; }
.numpad .tall { grid-row: span 2; height: auto; }
.numpad .half { grid-column: span 3; }

.tester h2 { margin: 28px 0 0; color: #1e2130; font-size: 21px; font-weight: 700; line-height: 24px; }

/* Sidebar */
.sidebar {
  flex: none;
  display: flex;
  flex-direction: column;
  align-items: center;
  width: 68px;
  padding: 2px 2px 3px 0;
  background: #f7f7f7;
  border-left: 1px solid #bdbdbd;
}
.sidebar .plain { width: 50px; height: 50px; }
.sidebar .add { height: 58px; }
.sidebar .plain svg:not(.thin) { width: 22px; height: 22px; }
.side-rule { width: 35px; height: 1px; margin: auto 0 3px; background: #bdbdbd; }

/* Taskbar */
.taskbar {
  flex: none;
  display: grid;
  grid-template-columns: 1fr auto 1fr;
  align-items: center;
  height: 60px;
  padding: 0 24px 0 15px;
  border-top: 1px solid #a9b3c4;
  background: linear-gradient(to right, #e2eefa 0%, #dfeaf8 20%, #d5e0f7 36%, #d3e2f8 44%, #d9dcee 57%, #d5e0f6 66%, #e2edf9 82%, #e2edf9 100%);
}
.weather { justify-self: start; }
.apps { display: flex; align-items: center; gap: 15px; margin-left: 8px; }
.apps > .plain { width: 40px; height: 49px; }
.search {
  display: flex;
  align-items: center;
  gap: 12px;
  width: 274px;
  height: 39px;
  margin: 0 -5px 0 -2px;
  padding: 0 7px 0 14px;
  border: 1px solid #bcc8dd;
  border-radius: 20px;
  background: #f3f6fd;
  font-size: 16px;
}
.search input { flex: 1; min-width: 0; padding: 0; border: 0; outline: 0; background: none; }
.search input::placeholder { color: #555; opacity: 1; }
.apps > .current { width: 48px; margin: 0 -4px; position: relative; border-radius: 5px; background: #edf1fb; }
.current::after {
  content: "";
  position: absolute;
  bottom: 0;
  left: 14px;
  width: 20px;
  height: 4px;
  border-radius: 2px;
  background: #0a74d4;
}
.tray { display: flex; align-items: center; justify-self: end; }
.lang { margin: 0 22px 0 26px; text-align: center; }
.status { gap: 10px; margin-right: 20px; }
.clock { text-align: right; font-size: 15px; }
```
